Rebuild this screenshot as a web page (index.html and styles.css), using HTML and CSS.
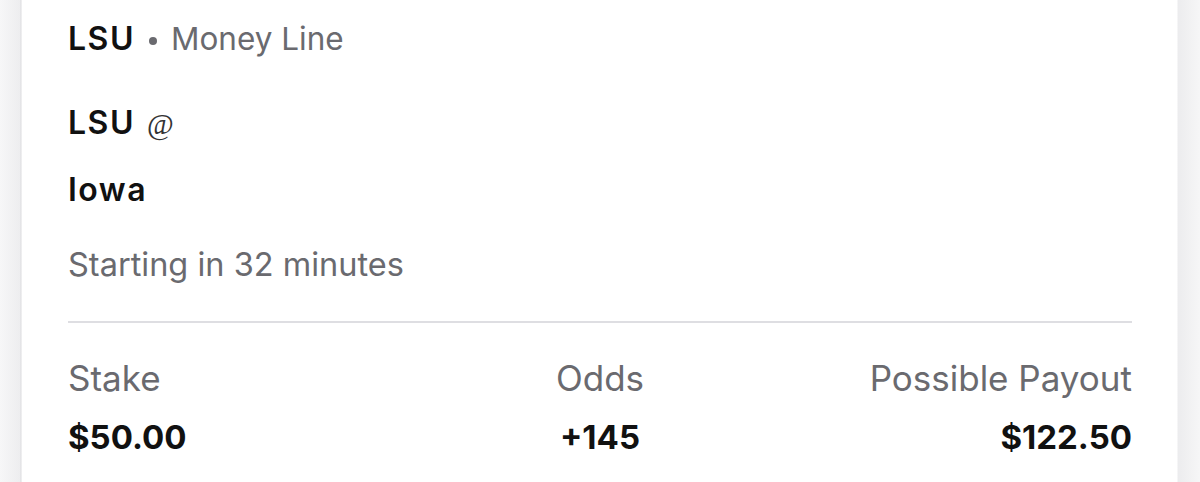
FILE: index.html
```html
<!DOCTYPE html>
<html lang="en">
<head>
<meta charset="utf-8">
<title>Bet slip</title>
<link rel="stylesheet" href="styles.css">
</head>
<body>
<div class="page">
  <div class="card">
    <div class="market"><span class="team">LSU</span><span class="dot"></span><span class="type">Money Line</span></div>
    <div class="line first"><span class="team">LSU</span><span class="at">@</span></div>
    <div class="line second"><span class="team">Iowa</span></div>
    <div class="start">Starting in 32 minutes</div>
    <div class="divider"></div>
    <div class="stats">
      <div class="stat left"><div class="label">Stake</div><div class="value">$50.00</div></div>
      <div class="stat center"><div class="label">Odds</div><div class="value">+145</div></div>
      <div class="stat right"><div class="label">Possible Payout</div><div class="value">$122.50</div></div>
    </div>
  </div>
</div>
</body>
</html>
```

FILE: styles.css
```css
html, body {
  margin: 0;
  padding: 0;
  height: 100%;
  overflow: hidden;
}
body {
  background: #f5f5f6;
  font-family: "Inter", "Open Sans", sans-serif;
}
.page {
  height: 482px;
  display: flex;
  padding: 0 23px 0 22px;
  background: linear-gradient(to right, #f7f7f8 0, #ededef 20px, #dcdcdf 21px, #ffffff 22px, #ffffff 1177px, #ececee 1178px, #f6f6f7 1200px);
}
.card {
  flex: 1;
  background: #ffffff;
  padding: 19px 45px 0 46px;
  display: flex;
  flex-direction: column;
}
.market, .line, .start, .label, .value {
  height: 40px;
  line-height: 40px;
  white-space: nowrap;
}
.market {
  display: flex;
  align-items: center;
}
.team {
  font-weight: 600;
  color: #111111;
  font-size: 32px;
  letter-spacing: 1.5px;
}
.dot {
  width: 8px;
  height: 8px;
  border-radius: 50%;
  background: #6a6a6f;
  margin: 4px 14px 0 14px;
}
.type {
  color: #6a6a6f;
  font-size: 31.5px;
}
.line.first {
  margin-top: 44px;
}
.line.second {
  margin-top: 27px;
}
.at {
  font-family: "Liberation Serif", serif;
  color: #333333;
  font-size: 29px;
  margin-left: 12px;
}
.start {
  margin-top: 35px;
  font-size: 32.5px;
  color: #6a6a6f;
}
.divider {
  margin-top: 36px;
  height: 2px;
  background: #dedee2;
}
.stats {
  margin-top: 35px;
  display: grid;
  grid-template-columns: 1fr 1fr 1fr;
}
.stat {
  display: flex;
  flex-direction: column;
  gap: 19px;
}
.stat.center { align-items: center; }
.stat.right { align-items: flex-end; }
.label {
  font-size: 35px;
  color: #6a6a6f;
}
.value {
  font-size: 33px;
  font-weight: 700;
  color: #111111;
}
```
